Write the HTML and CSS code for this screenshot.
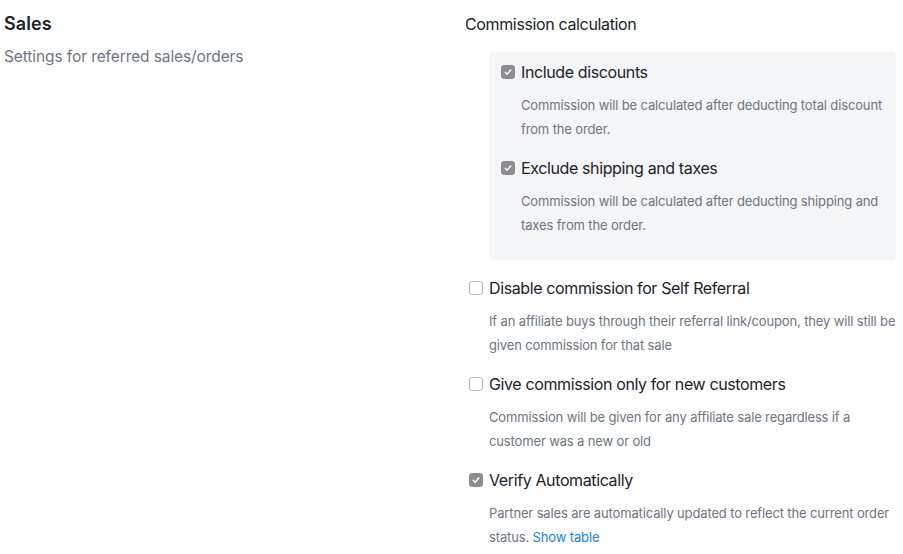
FILE: index.html
```html
<!DOCTYPE html>
<html>
<head>
<meta charset="utf-8">
<link rel="stylesheet" href="styles.css">
</head>
<body>
<div class="page">
  <div class="intro">
    <h2 class="title">Sales</h2>
    <p class="subtitle">Settings for referred sales/orders</p>
  </div>
  <div class="settings">
    <div class="group-title">Commission calculation</div>
    <div class="box">
      <div class="option">
        <label class="label"><span class="cb checked"><svg viewBox="0 0 14 14"><path d="M3.6 7.2 L6 9.6 L10.4 4.4" fill="none" stroke="#fff" stroke-width="1.5" stroke-linecap="round" stroke-linejoin="round"/></svg></span>Include discounts</label>
        <p class="desc">Commission will be calculated after deducting total discount from the order.</p>
      </div>
      <div class="option">
        <label class="label"><span class="cb checked"><svg viewBox="0 0 14 14"><path d="M3.6 7.2 L6 9.6 L10.4 4.4" fill="none" stroke="#fff" stroke-width="1.5" stroke-linecap="round" stroke-linejoin="round"/></svg></span>Exclude shipping and taxes</label>
        <p class="desc">Commission will be calculated after deducting shipping and taxes from the order.</p>
      </div>
    </div>
    <div class="option outer">
      <label class="label"><span class="cb"></span>Disable commission for Self Referral</label>
      <p class="desc">If an affiliate buys through their referral link/coupon, they will still be given commission for that sale</p>
    </div>
    <div class="option outer">
      <label class="label"><span class="cb"></span>Give commission only for new customers</label>
      <p class="desc">Commission will be given for any affiliate sale regardless if a customer was a new or old</p>
    </div>
    <div class="option outer">
      <label class="label"><span class="cb checked"><svg viewBox="0 0 14 14"><path d="M3.6 7.2 L6 9.6 L10.4 4.4" fill="none" stroke="#fff" stroke-width="1.5" stroke-linecap="round" stroke-linejoin="round"/></svg></span>Verify Automatically</label>
      <p class="desc">Partner sales are automatically updated to reflect the current order status. <a class="link" href="#">Show table</a></p>
    </div>
  </div>
</div>
</body>
</html>
```
FILE: styles.css
```css
* { box-sizing: border-box; }
html, body { margin: 0; padding: 0; background: #fff; }
body {
  font-family: Inter, "Helvetica Neue", Arial, sans-serif;
  color: #1f2328;
  -webkit-font-smoothing: antialiased;
}
.page {
  display: flex;
  padding: 12px 4px 0 4px;
}
.intro {
  width: 461px;
  flex: none;
}
.title {
  margin: 0;
  font-size: 18px;
  line-height: 24px;
  font-weight: 600;
  color: #202328;
  letter-spacing: 0.1px;
}
.subtitle {
  margin: 10px 0 0 0;
  font-size: 15.5px;
  line-height: 22px;
  color: #6e7580;
  letter-spacing: -0.1px;
}
.settings {
  width: 434px;
  flex: none;
}
.group-title {
  font-size: 16px;
  line-height: 24px;
  color: #202328;
  letter-spacing: -0.36px;
}
.box {
  margin: 16px 3px 16px 24px;
  background: #f4f5f7;
  border-radius: 5px;
  padding: 8px 8px 8px 8px;
}
.option {
  padding-bottom: 15px;
}
.label {
  display: flex;
  align-items: center;
  font-size: 16px;
  line-height: 24px;
  color: #202328;
  letter-spacing: -0.38px;
}
.cb {
  width: 14px;
  height: 14px;
  border-radius: 3px;
  border: 1px solid #b8b9bd;
  background: #fff;
  margin-right: 6px;
  margin-left: 4px;
  flex: none;
  display: flex;
}
.cb.checked {
  background: #8d8c91;
  border-color: #8d8c91;
}
.cb svg { width: 12px; height: 12px; }
.desc {
  margin: 9px 0 0 24px;
  font-size: 13px;
  line-height: 24px;
  color: #6e7580;
  letter-spacing: -0.14px;
}
.link {
  color: #1a7df0;
  text-decoration: none;
}
```
